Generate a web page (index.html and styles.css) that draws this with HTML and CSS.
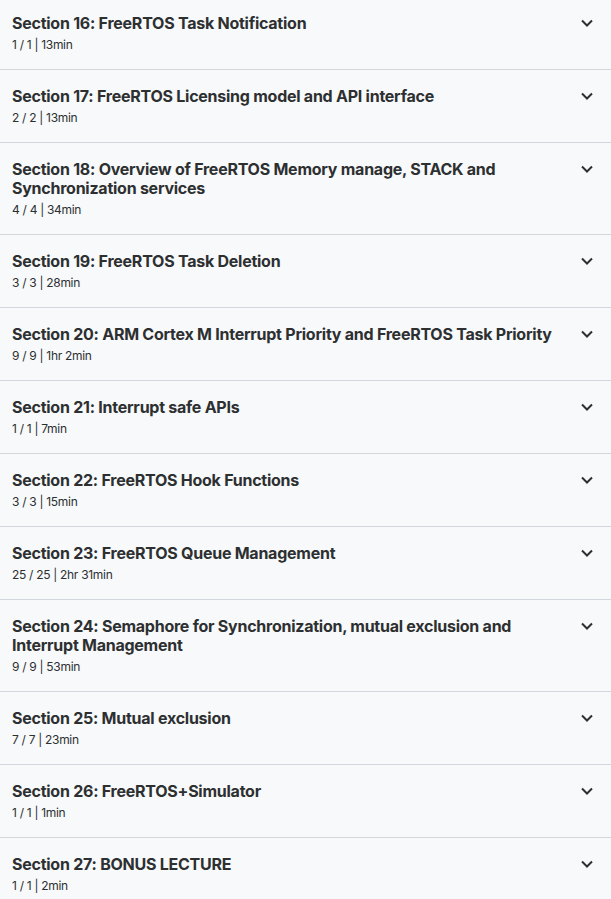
FILE: index.html
```html
<!DOCTYPE html>
<html lang="en">
<head>
<meta charset="utf-8">
<link rel="stylesheet" href="styles.css">
</head>
<body>
<div class="sections">
  <div class="section"><div class="info"><h3 class="title">Section 16: FreeRTOS Task Notification</h3><div class="meta">1 / 1 <span class="sep">|</span> 13min</div></div><svg class="chev" viewBox="0 0 12 8"><path d="M1 1.5 L6 6.5 L11 1.5"/></svg></div>
  <div class="section"><div class="info"><h3 class="title">Section 17: FreeRTOS Licensing model and API interface</h3><div class="meta">2 / 2 <span class="sep">|</span> 13min</div></div><svg class="chev" viewBox="0 0 12 8"><path d="M1 1.5 L6 6.5 L11 1.5"/></svg></div>
  <div class="section"><div class="info"><h3 class="title">Section 18: Overview of FreeRTOS Memory manage, STACK and Synchronization services</h3><div class="meta">4 / 4 <span class="sep">|</span> 34min</div></div><svg class="chev" viewBox="0 0 12 8"><path d="M1 1.5 L6 6.5 L11 1.5"/></svg></div>
  <div class="section"><div class="info"><h3 class="title">Section 19: FreeRTOS Task Deletion</h3><div class="meta">3 / 3 <span class="sep">|</span> 28min</div></div><svg class="chev" viewBox="0 0 12 8"><path d="M1 1.5 L6 6.5 L11 1.5"/></svg></div>
  <div class="section"><div class="info"><h3 class="title">Section 20: ARM Cortex M Interrupt Priority and FreeRTOS Task Priority</h3><div class="meta">9 / 9 <span class="sep">|</span> 1hr 2min</div></div><svg class="chev" viewBox="0 0 12 8"><path d="M1 1.5 L6 6.5 L11 1.5"/></svg></div>
  <div class="section"><div class="info"><h3 class="title">Section 21: Interrupt safe APIs</h3><div class="meta">1 / 1 <span class="sep">|</span> 7min</div></div><svg class="chev" viewBox="0 0 12 8"><path d="M1 1.5 L6 6.5 L11 1.5"/></svg></div>
  <div class="section"><div class="info"><h3 class="title">Section 22: FreeRTOS Hook Functions</h3><div class="meta">3 / 3 <span class="sep">|</span> 15min</div></div><svg class="chev" viewBox="0 0 12 8"><path d="M1 1.5 L6 6.5 L11 1.5"/></svg></div>
  <div class="section"><div class="info"><h3 class="title">Section 23: FreeRTOS Queue Management</h3><div class="meta">25 / 25 <span class="sep">|</span> 2hr 31min</div></div><svg class="chev" viewBox="0 0 12 8"><path d="M1 1.5 L6 6.5 L11 1.5"/></svg></div>
  <div class="section"><div class="info"><h3 class="title">Section 24: Semaphore for Synchronization, mutual exclusion and Interrupt Management</h3><div class="meta">9 / 9 <span class="sep">|</span> 53min</div></div><svg class="chev" viewBox="0 0 12 8"><path d="M1 1.5 L6 6.5 L11 1.5"/></svg></div>
  <div class="section"><div class="info"><h3 class="title">Section 25: Mutual exclusion</h3><div class="meta">7 / 7 <span class="sep">|</span> 23min</div></div><svg class="chev" viewBox="0 0 12 8"><path d="M1 1.5 L6 6.5 L11 1.5"/></svg></div>
  <div class="section"><div class="info"><h3 class="title">Section 26: FreeRTOS+Simulator</h3><div class="meta">1 / 1 <span class="sep">|</span> 1min</div></div><svg class="chev" viewBox="0 0 12 8"><path d="M1 1.5 L6 6.5 L11 1.5"/></svg></div>
  <div class="section"><div class="info"><h3 class="title">Section 27: BONUS LECTURE</h3><div class="meta">1 / 1 <span class="sep">|</span> 2min</div></div><svg class="chev" viewBox="0 0 12 8"><path d="M1 1.5 L6 6.5 L11 1.5"/></svg></div>
</div>
</body>
</html>
```
FILE: styles.css
```css
html, body {
  margin: 0;
  padding: 0;
  background: #f7f9fa;
}
body {
  font-family: Inter, "Noto Sans", "Liberation Sans", sans-serif;
  color: #2d2f31;
}
.sections {
  margin-top: -3px;
}
.section {
  display: flex;
  align-items: flex-start;
  justify-content: space-between;
  gap: 8px;
  padding: 17px 18px 16px 12px;
  border-bottom: 1px solid #d1d7dc;
}
.info {
  display: flex;
  flex-direction: column;
  gap: 3px;
}
.title {
  margin: 0;
  font-size: 16px;
  line-height: 19px;
  font-weight: 700;
  letter-spacing: -0.25px;
}
.meta {
  font-size: 12px;
  line-height: 17px;
  font-weight: 400;
  letter-spacing: -0.3px;
}
.chev {
  flex: none;
  width: 12px;
  height: 8px;
  margin-top: 5px;
  fill: none;
  stroke: #2d2f31;
  stroke-width: 2;
}
```
